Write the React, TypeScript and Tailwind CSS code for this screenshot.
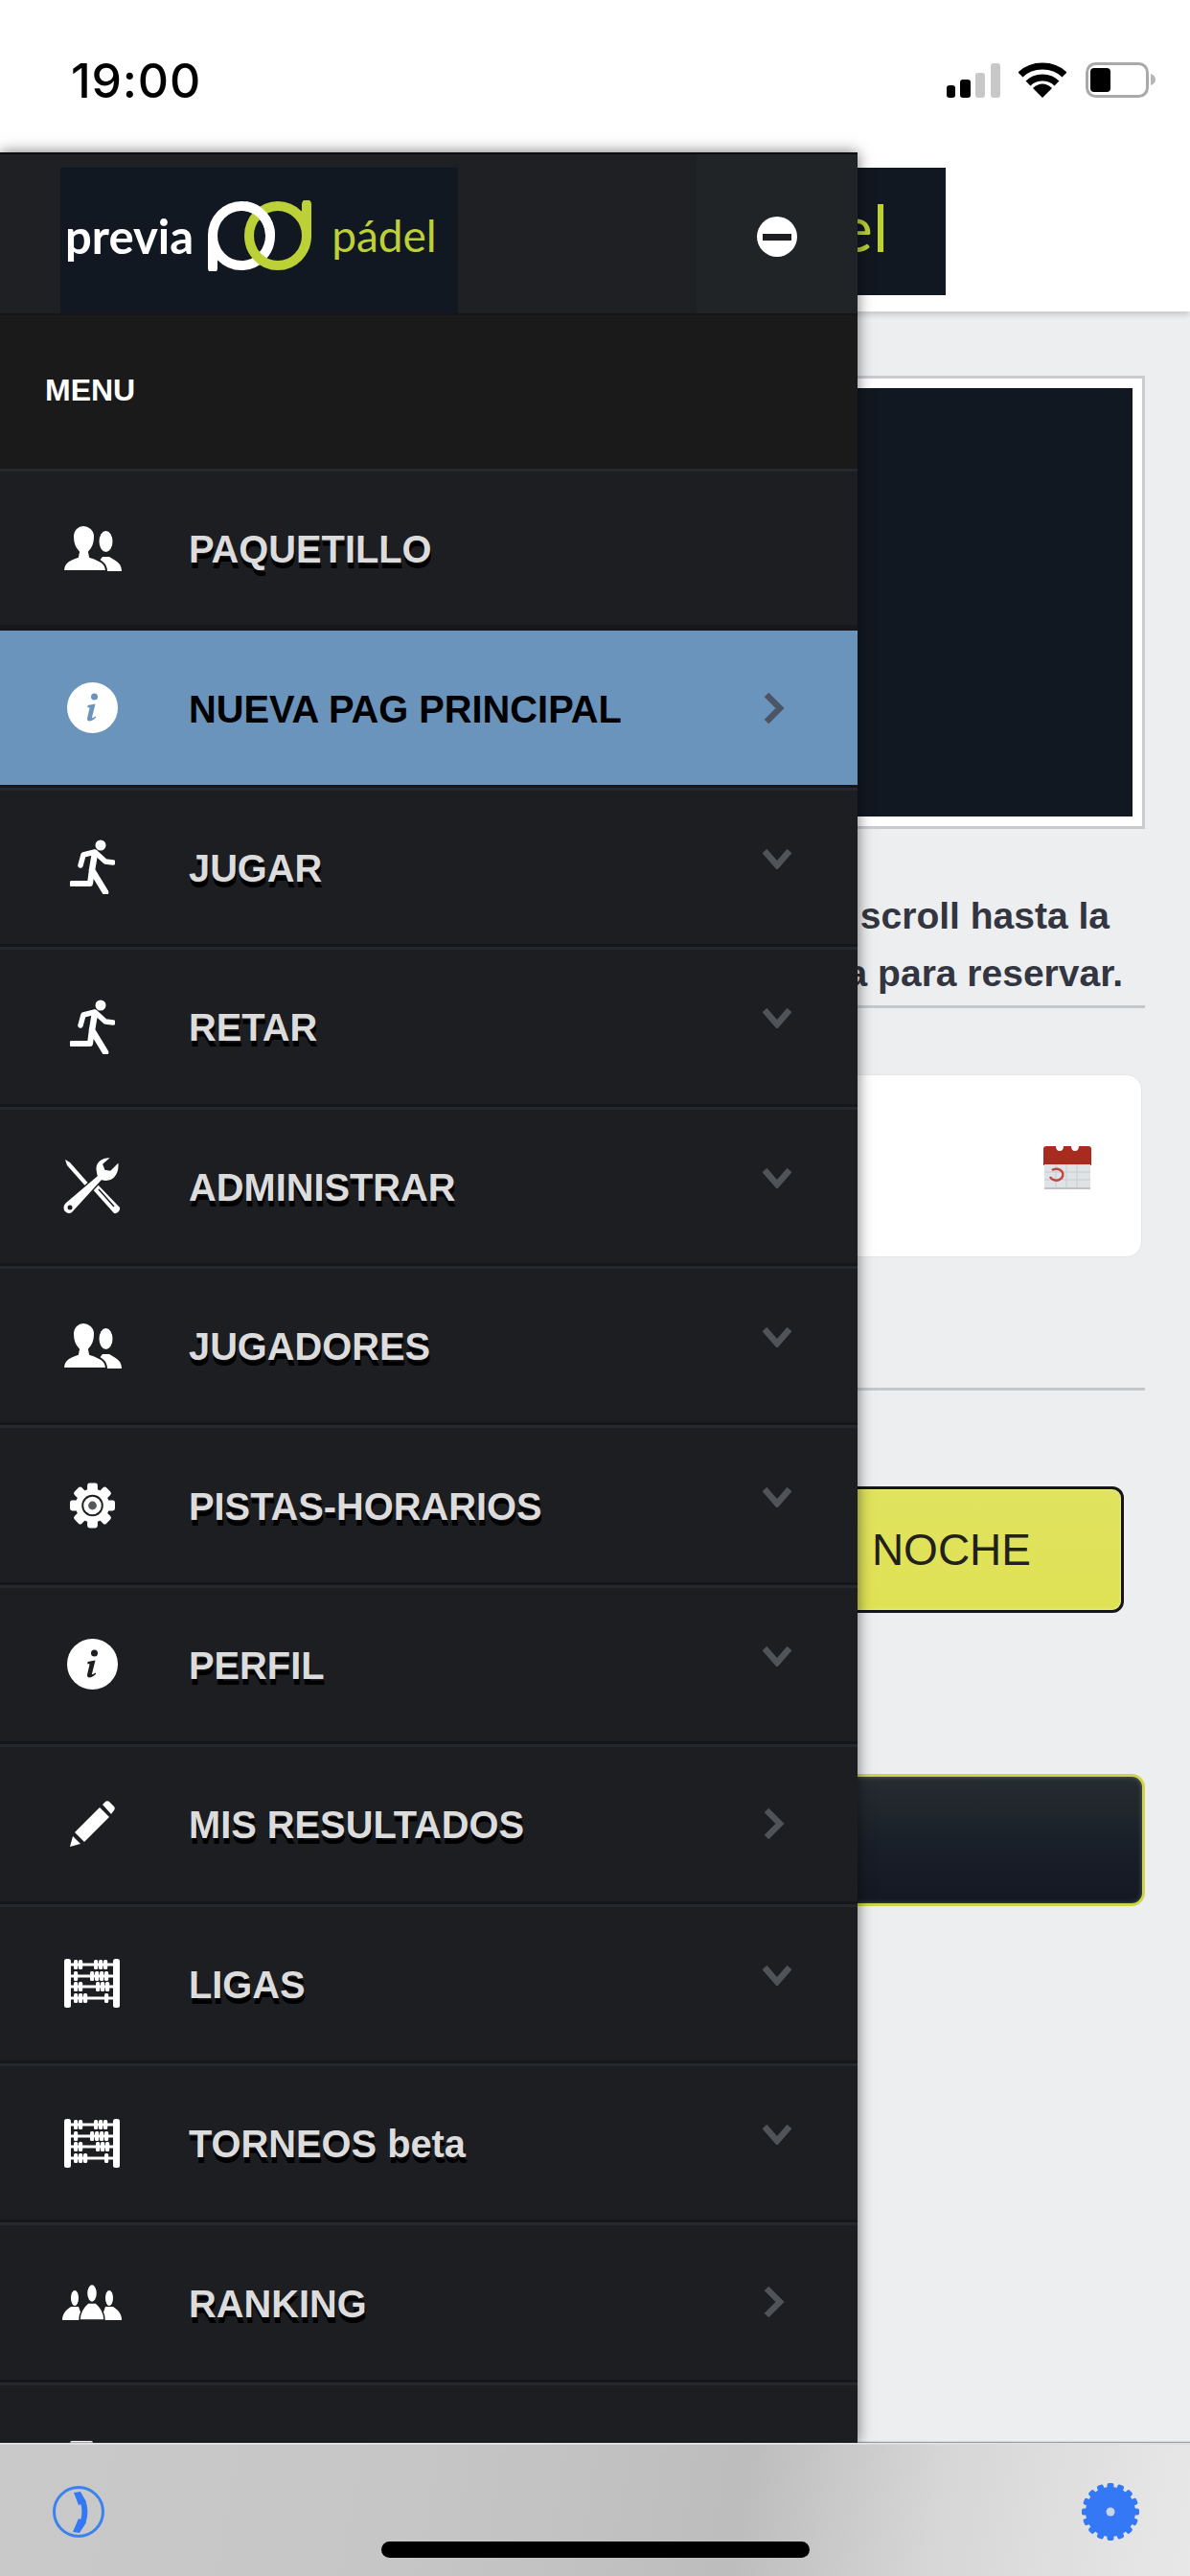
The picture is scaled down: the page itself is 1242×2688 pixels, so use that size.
const sans = "[font-family:'Liberation_Sans',Arial,sans-serif]"

function Users() {
  return (
    <svg width="61" height="48" viewBox="0 0 61 48" fill="#fff">
      <ellipse cx="44.500" cy="17" rx="7" ry="11" />
      <path d="M36 48c0-8 2-12 5-15h7c4 3 13 5 13 15z" />
      <path
        d="M0 48c0-9 6-12 15-15l1-5c-4-4-6-9-6-16C10 5 15 0 21 0s12 5 12 12c0 7-2 12-6 16l1 5c9 3 17 6 17 15z"
        stroke="#1c1e22"
        strokeWidth="2"
      />
    </svg>
  )
}

function Runner() {
  return (
    <svg width="47" height="57" viewBox="0 0 47 57" fill="none" stroke="#fff" strokeWidth="5.5" strokeLinecap="round" strokeLinejoin="round">
      <circle cx="32" cy="6" r="5.5" fill="#fff" stroke="none" />
      <path d="M11 27l3-11 12-3 11 10 8 1" />
      <path d="M26 14l-3 18 14 23" strokeWidth="6.5" />
      <path d="M23 31l-2 15H2" strokeWidth="6" />
    </svg>
  )
}

function Tools() {
  return (
    <svg width="62" height="59" viewBox="0 0 62 59">
      <path d="M3 2l5 3 23 26-3 3L5 8z" fill="#fff" />
      <path d="M29 30l5-5 26 27c1 3-3 7-6 6z" fill="#fff" />
      <path d="M38 33l16 18M33 37l16 18" stroke="#1c1e22" strokeWidth="1.5" />
      <path
        d="M59 4l-9 9-5-1-2-5 8-7C43-2 33 4 35 14c0 3 1 4 1 5L3 47c-3 3-3 8 0 10 3 3 7 2 9-1l29-32c9 3 20-3 18-20z"
        fill="#fff"
        stroke="#1c1e22"
        strokeWidth="1.5"
      />
      <circle cx="8" cy="52" r="2.5" fill="#1c1e22" />
    </svg>
  )
}

function Cog() {
  const teeth = [0, 45, 90, 135, 180, 225, 270, 315]
  return (
    <svg width="47" height="48" viewBox="0 0 48 48">
      {teeth.map((a) => (
        <rect key={a} x="18.5" y="0" width="11" height="12" rx="2.5" fill="#fff" transform={`rotate(${a} 24 24)`} />
      ))}
      <circle cx="24" cy="24" r="18" fill="#fff" />
      <circle cx="24" cy="24" r="11.5" fill="#1c1e22" />
      <circle cx="24" cy="24" r="9.500" fill="#fff" />
      <circle cx="24" cy="24" r="4.5" fill="#55585c" />
    </svg>
  )
}

function Info({ color }: { color: string }) {
  return (
    <svg width="53" height="53" viewBox="0 0 53 53">
      <circle cx="26.5" cy="26.5" r="26.5" fill="#fff" />
      <circle cx="28.5" cy="15" r="3.500" fill={color} />
      <path d="M21.500 24l8-1.500-3.500 14c-.2 1 .8 1.200 3.500-1l.7 1.200C26 41 20.500 42 21 37.500L23.500 27c.2-1-.7-1-2.200-.7z" fill={color} />
    </svg>
  )
}

function Pencil() {
  return (
    <svg width="47" height="48" viewBox="0 0 47 48" fill="#fff">
      <path d="M0 48l3-11 8 8z" />
      <path d="M5 33L31 7l10 10-26 26z" />
      <path d="M34 4l3-3c1-1 3-1 4 0l5 5c1 1 1 3 0 4l-3 4z" />
    </svg>
  )
}

function Abacus() {
  const rows = [
    { y: 6, beads: [10, 15, 31, 36, 41] },
    { y: 18, beads: [10, 27, 32, 37, 42] },
    { y: 29, beads: [10, 15, 33, 38, 43] },
    { y: 41, beads: [10, 15, 20, 42] },
  ]
  return (
    <svg width="58" height="51" viewBox="0 0 58 51" fill="#fff">
      <rect x="0" y="0" width="7" height="51" rx="2.500" />
      <rect x="51" y="0" width="7" height="51" rx="2.500" />
      {rows.map((r) => (
        <g key={r.y}>
          <rect x="5" y={r.y - 1.5} width="48" height="3" />
          {r.beads.map((b) => (
            <rect key={b} x={b} y={r.y - 5} width="4.200" height="10" rx="1.500" />
          ))}
        </g>
      ))}
    </svg>
  )
}

function Group() {
  return (
    <svg width="62" height="37" viewBox="0 0 62 37" fill="#fff">
      <ellipse cx="13" cy="14" rx="4" ry="8" />
      <path d="M0 37c0-6 3-10 9-14h8l5 14z" />
      <ellipse cx="49" cy="14" rx="4" ry="8" />
      <path d="M40 37l5-14h8c6 4 9 8 9 14z" />
      <ellipse cx="31" cy="9" rx="5.500" ry="9.500" stroke="#1c1e22" strokeWidth="1.500" />
      <path d="M18 37c0-8 3-13 9-18h8c6 5 9 10 9 18z" stroke="#1c1e22" strokeWidth="1.500" />
    </svg>
  )
}

function ChevronDown() {
  return (
    <svg width="30" height="21" viewBox="0 0 30 21" fill="none" stroke="#505357" strokeWidth="6.500">
      <path d="M2 2l13 15L28 2" />
    </svg>
  )
}

function ChevronRight({ color }: { color: string }) {
  return (
    <svg width="22" height="32" viewBox="0 0 22 32" fill="none" stroke={color} strokeWidth="6.500">
      <path d="M3 2l14 14L3 30" />
    </svg>
  )
}

type Item = {
  label: string
  icon: React.ReactNode
  arrow: 'down' | 'right'
  active?: boolean
}

const items: Item[] = [
  { label: 'PAQUETILLO', icon: <Users />, arrow: 'right' },
  { label: 'NUEVA PAG PRINCIPAL', icon: <Info color="#6b94bc" />, arrow: 'right', active: true },
  { label: 'JUGAR', icon: <Runner />, arrow: 'down' },
  { label: 'RETAR', icon: <Runner />, arrow: 'down' },
  { label: 'ADMINISTRAR', icon: <Tools />, arrow: 'down' },
  { label: 'JUGADORES', icon: <Users />, arrow: 'down' },
  { label: 'PISTAS-HORARIOS', icon: <Cog />, arrow: 'down' },
  { label: 'PERFIL', icon: <Info color="#1c1e22" />, arrow: 'down' },
  { label: 'MIS RESULTADOS', icon: <Pencil />, arrow: 'right' },
  { label: 'LIGAS', icon: <Abacus />, arrow: 'down' },
  { label: 'TORNEOS beta', icon: <Abacus />, arrow: 'down' },
  { label: 'RANKING', icon: <Group />, arrow: 'right' },
]

function Row({ item, first }: { item: Item; first: boolean }) {
  return (
    <div
      className={`flex h-[166.4px] shrink-0 items-center border-b-[3px] border-b-[#15171a] border-t-[3px] ${
        item.active ? 'border-t-[#15171a] bg-[#6b94bc]' : 'border-t-[#25282c] bg-[#1c1e22]'
      }`}
    >
      <div className="flex w-[192px] shrink-0 justify-center">{item.icon}</div>
      <div
        className={`ml-[5px] mt-[4px] flex-1 text-[39.8px] font-bold leading-none ${
          item.active ? 'text-black' : 'text-[#dcdcdc] [text-shadow:1px_6px_0_#000]'
        }`}
      >
        {item.label}
      </div>
      {item.arrow === 'down' ? (
        <div className="mb-[17px] mr-[69px]">
          <ChevronDown />
        </div>
      ) : first ? null : (
        <div className="mr-[76px]">
          <ChevronRight color={item.active ? '#4a5665' : '#505357'} />
        </div>
      )}
    </div>
  )
}

function Drawer() {
  return (
    <div className={`${sans} absolute left-0 top-[159px] z-10 flex h-[2390px] w-[895px] flex-col overflow-hidden border-t-2 border-t-[#0c0d0e] bg-[#1c1e22] shadow-[0_0_14px_rgba(0,0,0,0.55)]`}>
      <div className="flex h-[166px] shrink-0 items-end bg-[#1e2023] pl-[63px]">
        <div className="flex h-[152px] w-[415px] items-center bg-[#121822] pb-[10px] pl-[5px] [font-family:Lato,sans-serif]">
          <span className="text-[49px] font-bold leading-none text-white">previa</span>
          <svg className="ml-[14px]" width="110" height="74" viewBox="0 0 110 74" fill="none" strokeWidth="10">
            <ellipse cx="36" cy="37" rx="30" ry="31" stroke="#fff" />
            <path d="M6 37v34" stroke="#fff" strokeLinecap="round" />
            <ellipse cx="74" cy="37" rx="30" ry="31" stroke="#bcd037" />
            <path d="M104 37V4" stroke="#bcd037" strokeLinecap="round" />
            <path d="M40 6a30 31 0 0 1 26 30" stroke="#fff" />
          </svg>
          <span className="ml-[20px] text-[46px] leading-none text-[#bcd037]">pádel</span>
        </div>
        <div className="ml-auto flex h-full w-[168px] items-center justify-center bg-[#212427] pt-[6px]">
          <div className="flex h-[42px] w-[42px] items-center justify-center rounded-full bg-white">
            <div className="h-[7px] w-[30px] bg-[#1c1e22]" />
          </div>
        </div>
      </div>
      <div className="flex h-[162px] shrink-0 items-center border-t-2 border-t-[#151618] bg-[#1a1a1a] pb-[4px] pl-[47px] text-[32px] font-bold leading-none text-white">
        MENU
      </div>
      {items.map((item, i) => (
        <Row key={item.label} item={item} first={i === 0} />
      ))}
      <div className="shrink-0 border-t-[3px] border-t-[#25282c] pl-[73px] pt-[58px]">
        <div className="h-[6px] w-[24px] rounded-t-[2px] bg-white" />
      </div>
    </div>
  )
}

function Calendar() {
  return (
    <svg width="50" height="48" viewBox="0 0 50 48">
      <path d="M0 6q0-3 3-3h10q0 5 4 5t4-5h8q0 5 4 5t4-5h10q3 0 3 3v17H0z" fill="#a92a1f" />
      <rect x="1" y="22" width="48" height="25" fill="#dfe3e6" />
      <path d="M13 22v25M24 22v25M35 22v25M1 30h48M1 38h48" stroke="#c6cbcf" strokeWidth="1" />
      <path d="M9 28a7 6 0 1 1-2 7" fill="none" stroke="#c0473d" strokeWidth="2.500" />
      <rect x="1" y="46" width="48" height="2" fill="#bfc2c4" />
    </svg>
  )
}

function BlueGear() {
  const teeth = Array.from({ length: 16 }, (_, i) => (i * 360) / 16)
  return (
    <svg width="60" height="60" viewBox="0 0 60 60">
      {teeth.map((a) => (
        <rect key={a} x="26.500" y="0" width="7" height="12" rx="2" fill="#3478f6" transform={`rotate(${a} 30 30)`} />
      ))}
      <circle cx="30" cy="30" r="26" fill="#3478f6" />
      <circle cx="30" cy="30" r="4.500" fill="#c9d5ea" />
    </svg>
  )
}

function PhoneIcon() {
  return (
    <svg width="54" height="56" viewBox="0 0 54 56" fill="none">
      <circle cx="27" cy="28" r="25.500" stroke="#3b82f0" strokeWidth="3" />
      <path d="M27 12c8 5 9 25 0 33" stroke="#3478f6" strokeWidth="6" />
      <path d="M22 8l7-1 6 11-8 3zM21 49l7 1 7-11-8-4z" fill="#3478f6" />
    </svg>
  )
}

export default function App() {
  return (
    <div className={`${sans} relative flex h-[2688px] w-[1242px] flex-col overflow-hidden bg-white`}>
      <div className="flex h-[159px] shrink-0 items-center justify-between pl-[74px] pr-[36px] pt-[8px]">
        <span className="text-[50px] font-medium leading-none tracking-[0.8px] text-black [font-family:Inter,sans-serif]">19:00</span>
        <div className="flex items-center">
          <svg width="56" height="36" viewBox="0 0 56 36">
            <rect x="0" y="23" width="9" height="13" rx="3" fill="#000" />
            <rect x="14" y="17" width="11" height="19" rx="3" fill="#000" />
            <rect x="30" y="10" width="10" height="26" rx="3" fill="#c8c8c8" />
            <rect x="46" y="0" width="10" height="36" rx="3" fill="#c8c8c8" />
          </svg>
          <svg className="ml-[19px]" width="50" height="37" viewBox="0 0 50 37" fill="none" stroke="#000" strokeWidth="7">
            <path d="M2 13C14 1 36 1 48 13" />
            <path d="M10 22c8-8 22-8 30 0" />
            <path d="M15 27c6-6 14-6 20 0L25 37z" fill="#000" stroke="none" />
          </svg>
          <svg className="ml-[20px]" width="73" height="37" viewBox="0 0 73 37">
            <rect x="1.500" y="1.500" width="63" height="34" rx="9" fill="none" stroke="#a9a9a9" strokeWidth="3" />
            <rect x="5" y="6" width="21" height="25" rx="4" fill="#000" />
            <path d="M68 12c3 1 5 3 5 6s-2 5-5 6z" fill="#b5b5b5" />
          </svg>
        </div>
      </div>

      <div className="relative flex h-[166px] shrink-0 bg-white pt-[16px] shadow-[0_5px_5px_-1px_rgba(0,0,0,0.14)]">
        <div className="flex h-[133px] w-[987px] items-center justify-end bg-[#121822] pb-[10px] pr-[60px]">
          <span className="text-[68px] font-normal leading-none text-[#bcd037] [font-family:Lato,sans-serif]">pádel</span>
        </div>
      </div>

      <div className="flex min-h-0 flex-1 flex-col bg-[#eceef0] pl-[47px] pr-[47px] pt-[67px]">
        <div className="h-[473px] border-[3px] border-[#c9cbce] bg-white p-[10px]">
          <div className="h-full bg-[#121822]" />
        </div>
        <div className="mt-[61px] text-right text-[39px] font-bold leading-[60px] text-[#333640]">
          <div className="pr-[37px]">Haz scroll hasta la</div>
          <div className="pr-[23px]">franja para reservar.</div>
        </div>
        <div className="mt-[3px] h-[3px] bg-[#c5c8cb]" />
        <div className="mr-[3px] mt-[69px] flex h-[191px] items-center justify-end rounded-[16px] border border-[#e3e5e8] bg-white pr-[52px]">
          <Calendar />
        </div>
        <div className="mt-[136px] h-[3px] bg-[#c5c8cb]" />
        <div className="ml-[500px] mr-[22px] mt-[100px] flex h-[132px] items-center justify-end rounded-[12px] border-[3px] border-[#15151a] bg-[linear-gradient(180deg,#dfe35e,#e0e255)] pr-[94px] text-[46px] leading-none text-[#221f1c] shadow-[inset_0_0_3px_rgba(255,255,255,0.6)]">
          NOCHE
        </div>
        <div className="ml-[500px] mt-[168px] h-[138px] rounded-[14px] border-[3px] border-[#cdd64a] bg-[linear-gradient(180deg,#262d30,#1a2029_50%,#131822)] shadow-[inset_0_0_5px_rgba(255,255,255,0.25)]" />
      </div>

      <div className="relative z-20 flex h-[139px] shrink-0 items-start justify-between border-t-2 border-t-[#dedede] bg-[linear-gradient(100deg,#c9c9c9_0%,#c6c6c6_35%,#bdbdbd_62%,#d6d6d6_78%,#e8e8e8_100%)] pl-[55px] pr-[53px] pt-[40px] shadow-[0_-1px_1px_rgba(0,0,0,0.35)]">
        <div className="pt-[2px]">
          <PhoneIcon />
        </div>
        <BlueGear />
        <div className="absolute bottom-[19px] left-[398px] h-[17px] w-[447px] rounded-full bg-black" />
      </div>

      <Drawer />
    </div>
  )
}
